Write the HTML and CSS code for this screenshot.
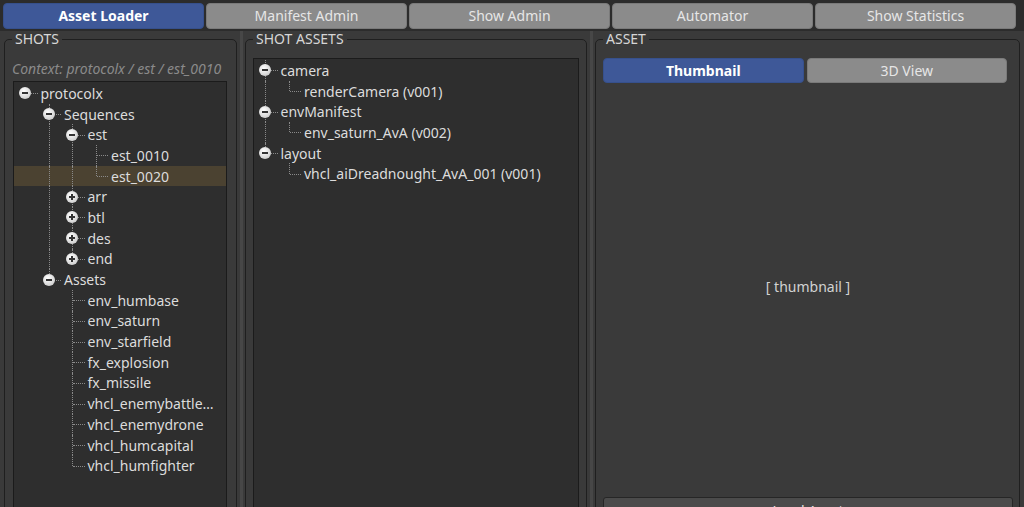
FILE: index.html
```html
<!DOCTYPE html>
<html lang="en">
<head>
    <meta charset="UTF-8">
    <meta name="viewport" content="width=device-width, initial-scale=1.0">
    <title>Asset Loader</title>
    <link rel="stylesheet" href="styles.css">
</head>

<body>
    <div class="tabbar">
        <div class="tab active">Asset Loader</div>
        <div class="tab">Manifest Admin</div>
        <div class="tab">Show Admin</div>
        <div class="tab">Automator</div>
        <div class="tab">Show Statistics</div>
    </div>

    <div class="main">
        <fieldset class="group shots">
            <legend>SHOTS</legend>
            <div class="context">Context: protocolx / est / est_0010</div>
            <div class="tree">
                <div class="row"><span class="c h"><i class="exp"></i></span><span class="lbl">protocolx</span></div>
                <div class="row"><span class="c"></span><span class="c t"><i class="exp"></i></span><span class="lbl">Sequences</span></div>
                <div class="row"><span class="c"></span><span class="c v"></span><span class="c t"><i class="exp"></i></span><span class="lbl">est</span></div>
                <div class="row"><span class="c"></span><span class="c v"></span><span class="c v"></span><span class="c t"></span><span class="lbl">est_0010</span></div>
                <div class="row sel"><span class="c"></span><span class="c v"></span><span class="c v"></span><span class="c l"></span><span class="lbl">est_0020</span></div>
                <div class="row"><span class="c"></span><span class="c v"></span><span class="c t"><i class="exp plus"></i></span><span class="lbl">arr</span></div>
                <div class="row"><span class="c"></span><span class="c v"></span><span class="c t"><i class="exp plus"></i></span><span class="lbl">btl</span></div>
                <div class="row"><span class="c"></span><span class="c v"></span><span class="c t"><i class="exp plus"></i></span><span class="lbl">des</span></div>
                <div class="row"><span class="c"></span><span class="c v"></span><span class="c l"><i class="exp plus"></i></span><span class="lbl">end</span></div>
                <div class="row"><span class="c"></span><span class="c l"><i class="exp"></i></span><span class="lbl">Assets</span></div>
                <div class="row"><span class="c"></span><span class="c"></span><span class="c t"></span><span class="lbl">env_humbase</span></div>
                <div class="row"><span class="c"></span><span class="c"></span><span class="c t"></span><span class="lbl">env_saturn</span></div>
                <div class="row"><span class="c"></span><span class="c"></span><span class="c t"></span><span class="lbl">env_starfield</span></div>
                <div class="row"><span class="c"></span><span class="c"></span><span class="c t"></span><span class="lbl">fx_explosion</span></div>
                <div class="row"><span class="c"></span><span class="c"></span><span class="c t"></span><span class="lbl">fx_missile</span></div>
                <div class="row"><span class="c"></span><span class="c"></span><span class="c t"></span><span class="lbl">vhcl_enemybattle…</span></div>
                <div class="row"><span class="c"></span><span class="c"></span><span class="c t"></span><span class="lbl">vhcl_enemydrone</span></div>
                <div class="row"><span class="c"></span><span class="c"></span><span class="c t"></span><span class="lbl">vhcl_humcapital</span></div>
                <div class="row"><span class="c"></span><span class="c"></span><span class="c l"></span><span class="lbl">vhcl_humfighter</span></div>
            </div>
        </fieldset>

        <div class="split"></div>

        <fieldset class="group shotassets">
            <legend>SHOT ASSETS</legend>
            <div class="tree">
                <div class="row"><span class="c t"><i class="exp"></i></span><span class="lbl">camera</span></div>
                <div class="row"><span class="c v"></span><span class="c l"></span><span class="lbl">renderCamera (v001)</span></div>
                <div class="row"><span class="c t"><i class="exp"></i></span><span class="lbl">envManifest</span></div>
                <div class="row"><span class="c v"></span><span class="c l"></span><span class="lbl">env_saturn_AvA (v002)</span></div>
                <div class="row"><span class="c l"><i class="exp"></i></span><span class="lbl">layout</span></div>
                <div class="row"><span class="c"></span><span class="c l"></span><span class="lbl">vhcl_aiDreadnought_AvA_001 (v001)</span></div>
            </div>
        </fieldset>

        <div class="split"></div>

        <fieldset class="group asset">
            <legend>ASSET</legend>
            <div class="toggle">
                <div class="btn on">Thumbnail</div>
                <div class="btn">3D View</div>
            </div>
            <div class="preview">[ thumbnail ]</div>
            <div class="loadbtn">Load Asset</div>
        </fieldset>
    </div>
</body>
</html>
```

FILE: styles.css
```css
body {
    margin: 0;
    background: #3a3a3a;
    color: #dadada;
    font-family: "Noto Sans", "Open Sans", sans-serif;
    font-size: 14px;
    overflow: hidden;
    height: 507px;
}

.tabbar {
    display: flex;
    gap: 2px;
    padding: 3px 8px 2px 3px;
    background: #2c2c2c;
}

.tab {
    flex: 1;
    height: 24px;
    line-height: 24px;
    text-align: center;
    background: #8b8b8b;
    color: #e6e6e6;
    border: 1px solid #7a7a7a;
    border-radius: 4px;
}

.tab.active {
    background: #3e5898;
    border-color: #36508c;
    color: #ffffff;
    font-weight: bold;
}

.main {
    display: flex;
    height: 500px;
    padding: 0 4px;
}

.split {
    flex: none;
    width: 8px;
    background: linear-gradient(to right, transparent 3px, #474747 3px, #474747 6px, transparent 6px);
}

.group {
    margin: 0;
    padding: 11px 7px 0 7px;
    border: 1px solid #1f1f1f;
    border-radius: 5px;
    min-width: 0;
    box-sizing: border-box;
}

.group legend {
    padding: 0 3px;
    line-height: 16px;
    color: #d6d6d6;
}

.shots {
    flex: none;
    width: 233px;
}

.shotassets {
    flex: none;
    width: 342px;
}

.asset {
    flex: 1;
    padding-right: 6px;
}

.context {
    line-height: 21px;
    font-style: italic;
    color: #8a8a8a;
    white-space: nowrap;
}

.tree {
    background: #2e2e2e;
    border: 1px solid #1b1b1b;
    padding-top: 1px;
    height: 460px;
    overflow: hidden;
}

.shots .tree {
    margin: 2px 2px 0 1px;
}

.row {
    display: flex;
    align-items: center;
    height: 20.7px;
    white-space: nowrap;
}

.row.sel {
    background: #4b4231;
}

.lbl {
    padding-left: 3px;
    color: #dcdcdc;
}

.c {
    position: relative;
    flex: none;
    width: 23.5px;
    height: 100%;
    display: flex;
    align-items: center;
    justify-content: center;
}

.c.v::before,
.c.t::before,
.c.l::before {
    content: '';
    position: absolute;
    left: 11px;
    top: 0;
    bottom: 0;
    border-left: 1px dotted #8a8a8a;
}

.c.l::before {
    bottom: 50%;
}

.c.t::after,
.c.l::after,
.c.h::after {
    content: '';
    position: absolute;
    left: 12px;
    right: 0;
    top: 50%;
    border-top: 1px dotted #8a8a8a;
}

.exp {
    position: relative;
    z-index: 1;
    width: 12px;
    height: 12px;
    margin-left: -1px;
    border-radius: 50%;
    background: radial-gradient(circle at 40% 35%, #ffffff, #d2d2d2 70%, #b8b8b8);
}

.exp::before {
    content: '';
    position: absolute;
    left: 3px;
    top: 5px;
    width: 6px;
    height: 2px;
    background: #333333;
}

.exp.plus::after {
    content: '';
    position: absolute;
    left: 5px;
    top: 3px;
    width: 2px;
    height: 6px;
    background: #333333;
}

.toggle {
    display: flex;
    gap: 3px;
    margin-right: 6px;
}

.btn {
    flex: 1;
    height: 23px;
    line-height: 23px;
    text-align: center;
    background: #8b8b8b;
    color: #e6e6e6;
    border: 1px solid #7a7a7a;
    border-radius: 4px;
}

.btn.on {
    background: #3e5898;
    border-color: #36508c;
    color: #ffffff;
    font-weight: bold;
}

.preview {
    height: 406px;
    display: flex;
    align-items: center;
    justify-content: center;
    color: #d2d2d2;
}

.loadbtn {
    margin-top: 8px;
    height: 24px;
    line-height: 26px;
    text-align: center;
    background: #4b4b4b;
    border: 1px solid #262626;
    border-radius: 3px;
    color: #e0e0e0;
}
```
